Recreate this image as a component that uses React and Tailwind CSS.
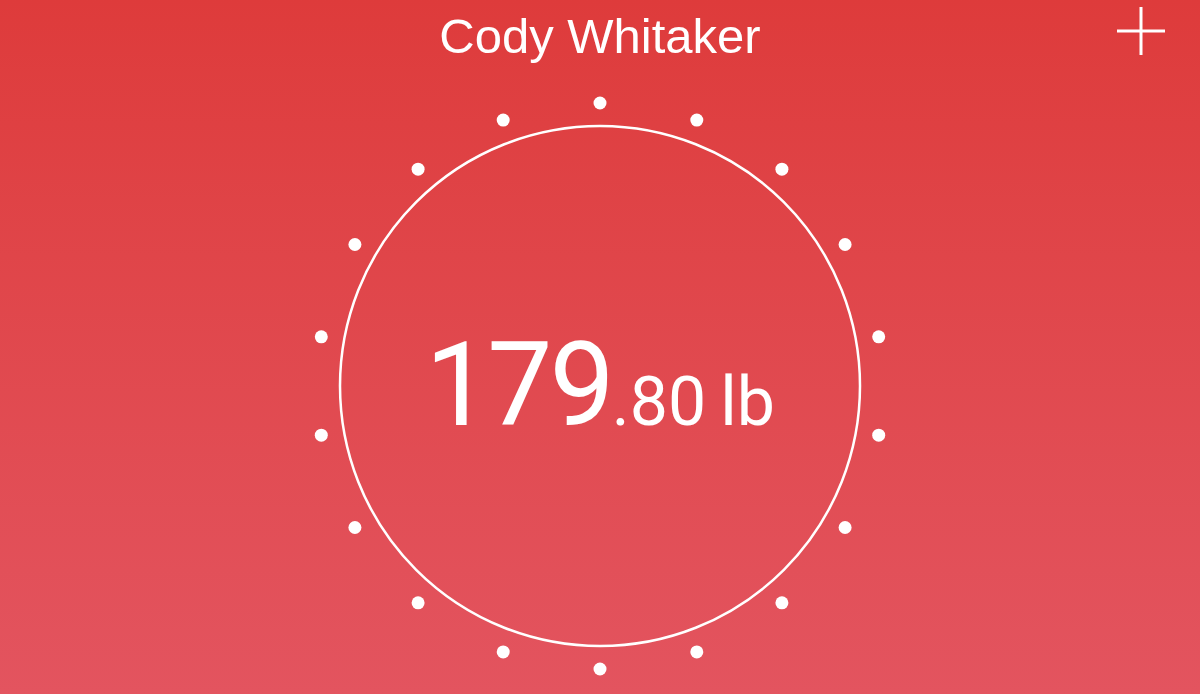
import React from 'react';

const DOTS = Array.from({ length: 18 }, (_, i) => {
  const a = (i * 20 * Math.PI) / 180;
  return { cx: 300 + 283 * Math.sin(a), cy: 300 - 283 * Math.cos(a) };
});

const Gauge = ({ whole, fraction, unit }) => (
  <div className="grid place-items-center w-[600px] h-[600px]">
    <svg
      className="[grid-area:1/1] w-[600px] h-[600px]"
      viewBox="0 0 600 600"
      fill="none"
    >
      <circle cx="300" cy="300" r="260" stroke="white" strokeWidth="2.5" />
      {DOTS.map((d, i) => (
        <circle key={i} cx={d.cx} cy={d.cy} r="6.5" fill="white" />
      ))}
    </svg>
    <div className="[grid-area:1/1] flex items-baseline text-white leading-none pb-[2px] font-['Roboto',sans-serif]">
      <span className="text-[116px] tracking-[-3px]">{whole}</span>
      <span className="text-[68px]">.{fraction}</span>
      <span className="text-[68px] ml-[14px]">{unit}</span>
    </div>
  </div>
);

export default function App() {
  return (
    <div
      className="w-[1200px] h-[694px] overflow-hidden flex flex-col items-center bg-gradient-to-b from-[#de3b3b] to-[#e3545f]"
      style={{ fontFamily: '"Liberation Sans", Arial, sans-serif' }}
    >
      {/* Header */}
      <div className="w-full h-[86px] flex items-start justify-between px-[34px] pt-[6px]">
        <div className="w-[50px]" />
        <h1 className="text-[49px] leading-none text-white pt-[6px]">Cody Whitaker</h1>
        <button className="w-[50px] h-[50px] flex items-center justify-center text-white">
          <svg width="50" height="50" viewBox="0 0 50 50">
            <path d="M25 1v48M1 25h48" stroke="white" strokeWidth="3" />
          </svg>
        </button>
      </div>

      <Gauge whole="179" fraction="80" unit="lb" />
    </div>
  );
}
